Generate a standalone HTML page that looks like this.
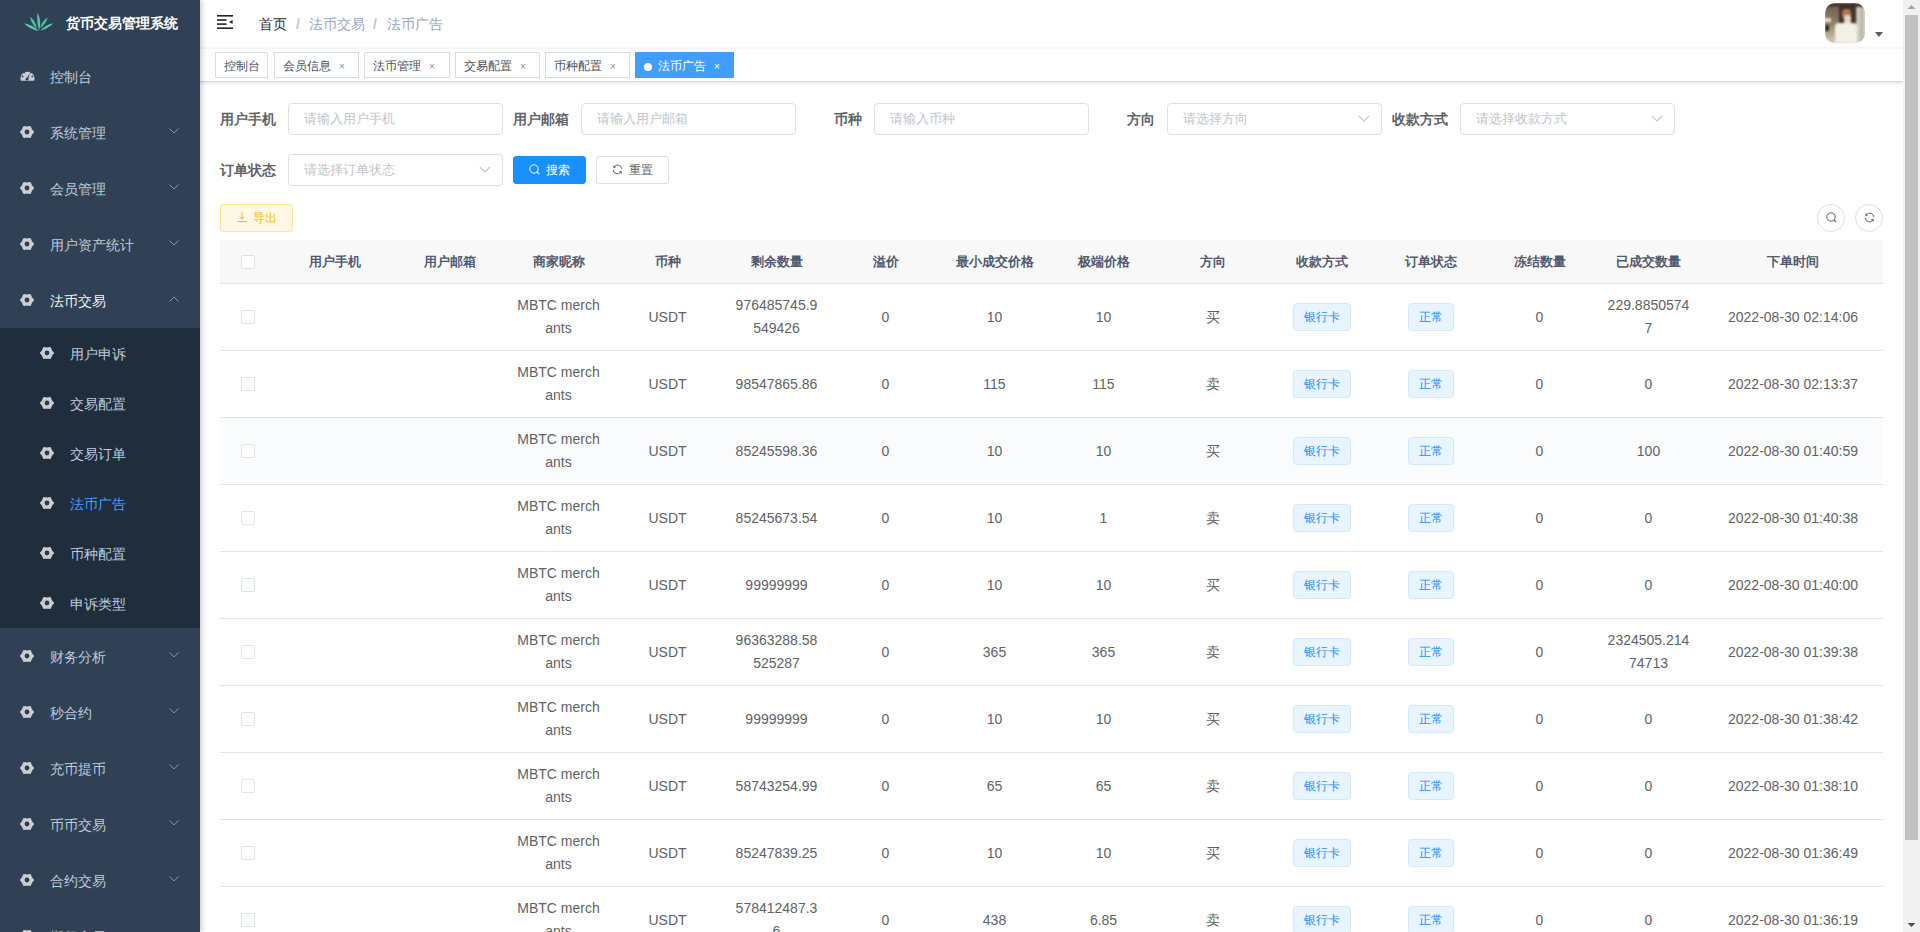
<!DOCTYPE html>
<html><head><meta charset="utf-8"><title>法币广告</title>
<style>
*{box-sizing:border-box;margin:0;padding:0}
html,body{width:1920px;height:932px;overflow:hidden;background:#fff;font-family:"Liberation Sans", sans-serif;}
#pg{position:absolute;left:0;top:0;width:1920px;height:932px;overflow:hidden}
.side{position:absolute;left:0;top:0;width:200px;height:932px;background:#304156;overflow:hidden;z-index:3;box-shadow:2px 0 5px rgba(0,21,41,.22)}
.title{position:absolute;left:66px;top:14px;font-size:14px;font-weight:bold;color:#fff;line-height:18px;white-space:nowrap;letter-spacing:0}
.mi,.si{position:absolute;left:0;width:200px;height:56px;color:#bfcbd9;font-size:14px}
.si{height:50px}
.mi .gi{position:absolute;left:20px;top:21px}
.si .gi{position:absolute;left:40px;top:18px}
.mt{position:absolute;left:50px;top:1px;line-height:56px;white-space:nowrap}
.si .mt{left:70px;line-height:50px}
.mi.open .mt{color:#f4f4f5}
.si.act .mt{color:#409eff}
.arr{position:absolute;left:169px;top:24px}
.sub{position:absolute;left:0;width:200px;background:#1f2d3d}
.nav{position:absolute;left:200px;top:0;width:1703px;height:48px;background:#fff}
.tv{position:absolute;left:200px;top:48px;width:1703px;height:34px;background:#fff;border-top:1px solid #f3f4f6;border-bottom:1px solid #d8dce5;box-shadow:0 1px 3px 0 rgba(0,0,0,.12),0 0 3px 0 rgba(0,0,0,.04);z-index:2}
.tg{position:absolute;top:52px;height:26px;border:1px solid #d8dce5;background:#fff;color:#495060;font-size:12px;line-height:26px;padding-left:8px;white-space:nowrap;z-index:2}
.tg span{display:inline-block}
.tg .cx{font-style:normal;display:inline-block;width:16px;text-align:center;font-size:10px;color:#8a8f99;margin-left:3px;position:relative;top:1px;vertical-align:top}
.tg.act{background:#409eff;border-color:#409eff;color:#fff}
.tg.act .cx{color:#fff}
.tg .dot{display:inline-block;width:8px;height:8px;border-radius:50%;background:#fff;margin-right:6px;vertical-align:-1px}
.crumb{position:absolute;top:16px;font-size:14px;line-height:16px;white-space:nowrap}
.lb{position:absolute;width:68px;height:32px;line-height:32px;text-align:right;padding-right:12px;font-size:14px;font-weight:bold;color:#606266;white-space:nowrap}
.inp{position:absolute;width:215px;height:32px;border:1px solid #dcdfe6;border-radius:4px;background:#fff}
.ph{position:absolute;left:15px;top:0;line-height:30px;font-size:13px;color:#c0c4cc;white-space:nowrap}
.sa{position:absolute;right:11px;top:11px}
.btn{position:absolute;height:28px;border-radius:3px;font-size:12px;line-height:26px;white-space:nowrap;text-align:center}
.tb{position:absolute;left:220px;top:240px;width:1663px;border-collapse:collapse;table-layout:fixed}
.tb th{background:#f8f8f9;height:43px;padding:10px 0;border-bottom:1px solid #e1e5ea;color:#515a6e;font-size:13px;font-weight:bold;text-align:center}
.tb td{padding:10px 0;border-bottom:1px solid #e1e5ea;color:#606266;font-size:14px;text-align:center;height:67px}
.tb tr.hov td{background:#fafbfc}
.cell{padding:0 10px;line-height:23px;word-break:break-all;white-space:normal}
.cb{display:inline-block;width:14px;height:14px;border:1px solid #e0e3e8;border-radius:2px;background:#fff;vertical-align:middle;position:relative;top:-1px}
.etag{display:inline-block;height:28px;line-height:26px;border:1px solid #d1e9ff;background:#e8f4ff;color:#1890ff;border-radius:4px;font-size:12px;text-align:center;vertical-align:middle}
.sb{position:absolute;left:1903px;top:0;width:17px;height:932px;background:#f1f1f1;z-index:5}
.thumb{position:absolute;left:2px;top:15px;width:13px;height:825px;background:#c1c1c1}
</style></head><body><div id="pg">
<div class="side">
<svg width="42" height="33" viewBox="0 0 42 33" style="position:absolute;left:18px;top:5px">
<path d="M21.3 25.5 Q23.8 16 19.6 7.5 Q18 16 21.3 25.5Z" fill="#52c4a0"/>
<path d="M18.8 23.5 Q17.5 15 12 11.8 Q13 18.5 18.8 23.5Z" fill="#4dbf9b"/>
<path d="M22.2 23.5 Q28.5 18 29.8 12.5 Q24 15.5 22.2 23.5Z" fill="#4dbf9b"/>
<path d="M21.2 26 Q14 19.5 5.8 18.3 Q12 24.5 21.2 26Z" fill="#5ac9a8"/>
<path d="M22.3 25.8 Q30 23.5 35.5 18.3 Q28.5 19 22.3 25.8Z" fill="#5ac9a8"/>
</svg>
<div class="title">货币交易管理系统</div>
<div class="mi" style="top:48px"><svg class="gi" width="15" height="13" viewBox="0 0 15 13"><path d="M0.9 11.8 A7 7 0 1 1 14.1 11.8 Z" fill="#c8cdd6"/><circle cx="2.6" cy="7.4" r="0.9" fill="#304156"/><circle cx="4.1" cy="3.6" r="0.9" fill="#304156"/><circle cx="7.4" cy="2.2" r="0.9" fill="#304156"/><circle cx="10.8" cy="3.6" r="0.9" fill="#304156"/><circle cx="12.3" cy="7.4" r="0.9" fill="#304156"/><path d="M6.3 9.8 L9.8 4.2 L8 10.6 Z" fill="#304156"/><circle cx="7" cy="10.2" r="1.4" fill="#304156"/></svg><span class="mt">控制台</span></div>
<div class="mi" style="top:104px"><svg class="gi" width="14" height="14" viewBox="0 0 14 14"><path d="M13.20 7.00 L11.33 9.38 L10.10 12.10 L7.00 11.75 L3.90 12.10 L2.67 9.38 L0.80 7.00 L2.67 4.62 L3.90 1.90 L7.00 2.25 L10.10 1.90 L11.33 4.62Z" fill="#c9ced6" stroke="#c9ced6" stroke-width="1.6" stroke-linejoin="round"/><circle cx="7" cy="7" r="2.4" fill="#38393c"/></svg><span class="mt">系统管理</span><svg class="arr" width="10" height="6" viewBox="0 0 10 6"><path d="M0.5 0.5 L5 5 L9.5 0.5" fill="none" stroke="#8593a5" stroke-width="1"/></svg></div>
<div class="mi" style="top:160px"><svg class="gi" width="14" height="14" viewBox="0 0 14 14"><path d="M13.20 7.00 L11.33 9.38 L10.10 12.10 L7.00 11.75 L3.90 12.10 L2.67 9.38 L0.80 7.00 L2.67 4.62 L3.90 1.90 L7.00 2.25 L10.10 1.90 L11.33 4.62Z" fill="#c9ced6" stroke="#c9ced6" stroke-width="1.6" stroke-linejoin="round"/><circle cx="7" cy="7" r="2.4" fill="#38393c"/></svg><span class="mt">会员管理</span><svg class="arr" width="10" height="6" viewBox="0 0 10 6"><path d="M0.5 0.5 L5 5 L9.5 0.5" fill="none" stroke="#8593a5" stroke-width="1"/></svg></div>
<div class="mi" style="top:216px"><svg class="gi" width="14" height="14" viewBox="0 0 14 14"><path d="M13.20 7.00 L11.33 9.38 L10.10 12.10 L7.00 11.75 L3.90 12.10 L2.67 9.38 L0.80 7.00 L2.67 4.62 L3.90 1.90 L7.00 2.25 L10.10 1.90 L11.33 4.62Z" fill="#c9ced6" stroke="#c9ced6" stroke-width="1.6" stroke-linejoin="round"/><circle cx="7" cy="7" r="2.4" fill="#38393c"/></svg><span class="mt">用户资产统计</span><svg class="arr" width="10" height="6" viewBox="0 0 10 6"><path d="M0.5 0.5 L5 5 L9.5 0.5" fill="none" stroke="#8593a5" stroke-width="1"/></svg></div>
<div class="mi open" style="top:272px"><svg class="gi" width="14" height="14" viewBox="0 0 14 14"><path d="M13.20 7.00 L11.33 9.38 L10.10 12.10 L7.00 11.75 L3.90 12.10 L2.67 9.38 L0.80 7.00 L2.67 4.62 L3.90 1.90 L7.00 2.25 L10.10 1.90 L11.33 4.62Z" fill="#c9ced6" stroke="#c9ced6" stroke-width="1.6" stroke-linejoin="round"/><circle cx="7" cy="7" r="2.4" fill="#38393c"/></svg><span class="mt">法币交易</span><svg class="arr" width="10" height="6" viewBox="0 0 10 6"><path d="M0.5 5.5 L5 1 L9.5 5.5" fill="none" stroke="#8593a5" stroke-width="1"/></svg></div>
<div class="sub" style="top:328px;height:300px"></div>
<div class="si" style="top:328px"><svg class="gi" width="14" height="14" viewBox="0 0 14 14"><path d="M13.20 7.00 L11.33 9.38 L10.10 12.10 L7.00 11.75 L3.90 12.10 L2.67 9.38 L0.80 7.00 L2.67 4.62 L3.90 1.90 L7.00 2.25 L10.10 1.90 L11.33 4.62Z" fill="#c9ced6" stroke="#c9ced6" stroke-width="1.6" stroke-linejoin="round"/><circle cx="7" cy="7" r="2.4" fill="#38393c"/></svg><span class="mt">用户申诉</span></div>
<div class="si" style="top:378px"><svg class="gi" width="14" height="14" viewBox="0 0 14 14"><path d="M13.20 7.00 L11.33 9.38 L10.10 12.10 L7.00 11.75 L3.90 12.10 L2.67 9.38 L0.80 7.00 L2.67 4.62 L3.90 1.90 L7.00 2.25 L10.10 1.90 L11.33 4.62Z" fill="#c9ced6" stroke="#c9ced6" stroke-width="1.6" stroke-linejoin="round"/><circle cx="7" cy="7" r="2.4" fill="#38393c"/></svg><span class="mt">交易配置</span></div>
<div class="si" style="top:428px"><svg class="gi" width="14" height="14" viewBox="0 0 14 14"><path d="M13.20 7.00 L11.33 9.38 L10.10 12.10 L7.00 11.75 L3.90 12.10 L2.67 9.38 L0.80 7.00 L2.67 4.62 L3.90 1.90 L7.00 2.25 L10.10 1.90 L11.33 4.62Z" fill="#c9ced6" stroke="#c9ced6" stroke-width="1.6" stroke-linejoin="round"/><circle cx="7" cy="7" r="2.4" fill="#38393c"/></svg><span class="mt">交易订单</span></div>
<div class="si act" style="top:478px"><svg class="gi" width="14" height="14" viewBox="0 0 14 14"><path d="M13.20 7.00 L11.33 9.38 L10.10 12.10 L7.00 11.75 L3.90 12.10 L2.67 9.38 L0.80 7.00 L2.67 4.62 L3.90 1.90 L7.00 2.25 L10.10 1.90 L11.33 4.62Z" fill="#c9ced6" stroke="#c9ced6" stroke-width="1.6" stroke-linejoin="round"/><circle cx="7" cy="7" r="2.4" fill="#38393c"/></svg><span class="mt">法币广告</span></div>
<div class="si" style="top:528px"><svg class="gi" width="14" height="14" viewBox="0 0 14 14"><path d="M13.20 7.00 L11.33 9.38 L10.10 12.10 L7.00 11.75 L3.90 12.10 L2.67 9.38 L0.80 7.00 L2.67 4.62 L3.90 1.90 L7.00 2.25 L10.10 1.90 L11.33 4.62Z" fill="#c9ced6" stroke="#c9ced6" stroke-width="1.6" stroke-linejoin="round"/><circle cx="7" cy="7" r="2.4" fill="#38393c"/></svg><span class="mt">币种配置</span></div>
<div class="si" style="top:578px"><svg class="gi" width="14" height="14" viewBox="0 0 14 14"><path d="M13.20 7.00 L11.33 9.38 L10.10 12.10 L7.00 11.75 L3.90 12.10 L2.67 9.38 L0.80 7.00 L2.67 4.62 L3.90 1.90 L7.00 2.25 L10.10 1.90 L11.33 4.62Z" fill="#c9ced6" stroke="#c9ced6" stroke-width="1.6" stroke-linejoin="round"/><circle cx="7" cy="7" r="2.4" fill="#38393c"/></svg><span class="mt">申诉类型</span></div>
<div class="mi" style="top:628px"><svg class="gi" width="14" height="14" viewBox="0 0 14 14"><path d="M13.20 7.00 L11.33 9.38 L10.10 12.10 L7.00 11.75 L3.90 12.10 L2.67 9.38 L0.80 7.00 L2.67 4.62 L3.90 1.90 L7.00 2.25 L10.10 1.90 L11.33 4.62Z" fill="#c9ced6" stroke="#c9ced6" stroke-width="1.6" stroke-linejoin="round"/><circle cx="7" cy="7" r="2.4" fill="#38393c"/></svg><span class="mt">财务分析</span><svg class="arr" width="10" height="6" viewBox="0 0 10 6"><path d="M0.5 0.5 L5 5 L9.5 0.5" fill="none" stroke="#8593a5" stroke-width="1"/></svg></div>
<div class="mi" style="top:684px"><svg class="gi" width="14" height="14" viewBox="0 0 14 14"><path d="M13.20 7.00 L11.33 9.38 L10.10 12.10 L7.00 11.75 L3.90 12.10 L2.67 9.38 L0.80 7.00 L2.67 4.62 L3.90 1.90 L7.00 2.25 L10.10 1.90 L11.33 4.62Z" fill="#c9ced6" stroke="#c9ced6" stroke-width="1.6" stroke-linejoin="round"/><circle cx="7" cy="7" r="2.4" fill="#38393c"/></svg><span class="mt">秒合约</span><svg class="arr" width="10" height="6" viewBox="0 0 10 6"><path d="M0.5 0.5 L5 5 L9.5 0.5" fill="none" stroke="#8593a5" stroke-width="1"/></svg></div>
<div class="mi" style="top:740px"><svg class="gi" width="14" height="14" viewBox="0 0 14 14"><path d="M13.20 7.00 L11.33 9.38 L10.10 12.10 L7.00 11.75 L3.90 12.10 L2.67 9.38 L0.80 7.00 L2.67 4.62 L3.90 1.90 L7.00 2.25 L10.10 1.90 L11.33 4.62Z" fill="#c9ced6" stroke="#c9ced6" stroke-width="1.6" stroke-linejoin="round"/><circle cx="7" cy="7" r="2.4" fill="#38393c"/></svg><span class="mt">充币提币</span><svg class="arr" width="10" height="6" viewBox="0 0 10 6"><path d="M0.5 0.5 L5 5 L9.5 0.5" fill="none" stroke="#8593a5" stroke-width="1"/></svg></div>
<div class="mi" style="top:796px"><svg class="gi" width="14" height="14" viewBox="0 0 14 14"><path d="M13.20 7.00 L11.33 9.38 L10.10 12.10 L7.00 11.75 L3.90 12.10 L2.67 9.38 L0.80 7.00 L2.67 4.62 L3.90 1.90 L7.00 2.25 L10.10 1.90 L11.33 4.62Z" fill="#c9ced6" stroke="#c9ced6" stroke-width="1.6" stroke-linejoin="round"/><circle cx="7" cy="7" r="2.4" fill="#38393c"/></svg><span class="mt">币币交易</span><svg class="arr" width="10" height="6" viewBox="0 0 10 6"><path d="M0.5 0.5 L5 5 L9.5 0.5" fill="none" stroke="#8593a5" stroke-width="1"/></svg></div>
<div class="mi" style="top:852px"><svg class="gi" width="14" height="14" viewBox="0 0 14 14"><path d="M13.20 7.00 L11.33 9.38 L10.10 12.10 L7.00 11.75 L3.90 12.10 L2.67 9.38 L0.80 7.00 L2.67 4.62 L3.90 1.90 L7.00 2.25 L10.10 1.90 L11.33 4.62Z" fill="#c9ced6" stroke="#c9ced6" stroke-width="1.6" stroke-linejoin="round"/><circle cx="7" cy="7" r="2.4" fill="#38393c"/></svg><span class="mt">合约交易</span><svg class="arr" width="10" height="6" viewBox="0 0 10 6"><path d="M0.5 0.5 L5 5 L9.5 0.5" fill="none" stroke="#8593a5" stroke-width="1"/></svg></div>
<div class="mi" style="top:908px"><svg class="gi" width="14" height="14" viewBox="0 0 14 14"><path d="M13.20 7.00 L11.33 9.38 L10.10 12.10 L7.00 11.75 L3.90 12.10 L2.67 9.38 L0.80 7.00 L2.67 4.62 L3.90 1.90 L7.00 2.25 L10.10 1.90 L11.33 4.62Z" fill="#c9ced6" stroke="#c9ced6" stroke-width="1.6" stroke-linejoin="round"/><circle cx="7" cy="7" r="2.4" fill="#38393c"/></svg><span class="mt">期权交易</span><svg class="arr" width="10" height="6" viewBox="0 0 10 6"><path d="M0.5 0.5 L5 5 L9.5 0.5" fill="none" stroke="#8593a5" stroke-width="1"/></svg></div>
</div>
<div class="nav">
<svg width="16" height="14" viewBox="0 0 16 14" style="position:absolute;left:17px;top:15px"><rect x="0" y="0" width="16" height="1.6" fill="#222"/><rect x="0" y="4.2" width="9.5" height="1.6" fill="#222"/><rect x="0" y="8.3" width="9.5" height="1.6" fill="#222"/><rect x="0" y="12.4" width="16" height="1.6" fill="#222"/><path d="M15.6 5 L12 7 L15.6 9 Z" fill="#222"/></svg>
<div class="crumb" style="left:59px;color:#303133">首页</div>
<div class="crumb" style="left:96px;color:#c0c4cc;font-weight:bold">/</div>
<div class="crumb" style="left:109px;color:#97a8be">法币交易</div>
<div class="crumb" style="left:173px;color:#c0c4cc;font-weight:bold">/</div>
<div class="crumb" style="left:187px;color:#97a8be">法币广告</div>
<div style="position:absolute;left:1625px;top:3px;width:40px;height:40px;border-radius:10px;overflow:hidden;background:#d4cdbc"><div style="position:absolute;left:-2px;top:-2px;width:44px;height:44px;filter:blur(1px)"><div style="position:absolute;left:2px;top:2px;width:40px;height:40px;background:#d4cdbc">
 <div style="position:absolute;left:0;top:0;width:14px;height:40px;background:linear-gradient(180deg,#6e5e4c 0%,#8c7a64 45%,#b5a58e 75%,#d8cbb8 100%)"></div>
 <div style="position:absolute;left:0;top:15px;width:6px;height:4px;background:#e8e0d0"></div>
 <div style="position:absolute;left:0;top:22px;width:4px;height:6px;background:#2e2822"></div>
 <div style="position:absolute;left:29px;top:0;width:11px;height:40px;background:linear-gradient(90deg,#9a9888 0%,#d9d8ca 40%,#b2b09e 70%,#e0dccd 100%)"></div>
 <div style="position:absolute;left:0;top:0;width:40px;height:4px;background:linear-gradient(180deg,#2a231e,#5a4a3c)"></div>
 <div style="position:absolute;left:14px;top:2px;width:17px;height:20px;background:#3e3229;border-radius:3px"></div>
 <div style="position:absolute;left:17px;top:6px;width:9px;height:9px;background:#b07a55;border-radius:4px 4px 2px 2px"></div>
 <div style="position:absolute;left:19px;top:12px;width:7px;height:9px;background:#e6d6c4;border-radius:2px"></div>
 <div style="position:absolute;left:10px;top:20px;width:22px;height:20px;background:#f3f0e6;border-radius:4px 4px 0 0"></div>
</div></div></div>
<svg width="8" height="5" viewBox="0 0 8 5" style="position:absolute;left:1675px;top:32px"><path d="M0 0 L8 0 L4 5Z" fill="#5a5e66"/></svg>
</div>
<div class="tv"></div>
<div class="tg" style="left:215px;width:53px"><span>控制台</span></div>
<div class="tg" style="left:274px;width:85px"><span>会员信息</span><i class="cx">×</i></div>
<div class="tg" style="left:364px;width:86px"><span>法币管理</span><i class="cx">×</i></div>
<div class="tg" style="left:455px;width:85px"><span>交易配置</span><i class="cx">×</i></div>
<div class="tg" style="left:545px;width:85px"><span>币种配置</span><i class="cx">×</i></div>
<div class="tg act" style="left:635px;width:99px"><i class="dot"></i><span>法币广告</span><i class="cx">×</i></div>
<div class="lb" style="left:220px;top:103px">用户手机</div>
<div class="inp" style="left:288px;top:103px"><span class="ph">请输入用户手机</span></div>
<div class="lb" style="left:513px;top:103px">用户邮箱</div>
<div class="inp" style="left:581px;top:103px"><span class="ph">请输入用户邮箱</span></div>
<div class="lb" style="left:806px;top:103px">币种</div>
<div class="inp" style="left:874px;top:103px"><span class="ph">请输入币种</span></div>
<div class="lb" style="left:1099px;top:103px">方向</div>
<div class="inp" style="left:1167px;top:103px"><span class="ph">请选择方向</span><svg class="sa" width="12" height="7" viewBox="0 0 12 7"><path d="M0.8 0.8 L6 6 L11.2 0.8" fill="none" stroke="#c0c4cc" stroke-width="1.2"/></svg></div>
<div class="lb" style="left:1392px;top:103px">收款方式</div>
<div class="inp" style="left:1460px;top:103px"><span class="ph">请选择收款方式</span><svg class="sa" width="12" height="7" viewBox="0 0 12 7"><path d="M0.8 0.8 L6 6 L11.2 0.8" fill="none" stroke="#c0c4cc" stroke-width="1.2"/></svg></div>
<div class="lb" style="left:220px;top:154px">订单状态</div>
<div class="inp" style="left:288px;top:154px"><span class="ph">请选择订单状态</span><svg class="sa" width="12" height="7" viewBox="0 0 12 7"><path d="M0.8 0.8 L6 6 L11.2 0.8" fill="none" stroke="#c0c4cc" stroke-width="1.2"/></svg></div>
<div class="btn" style="left:513px;top:156px;width:73px;background:#1890ff;border:1px solid #1890ff;color:#fff"><svg width="12" height="12" viewBox="0 0 12 12" style="vertical-align:-2px;margin-right:5px"><circle cx="5" cy="5" r="4.2" fill="none" stroke="#fff" stroke-width="1"/><path d="M8 8 L10.2 10.2" stroke="#fff" stroke-width="1.1"/></svg>搜索</div>
<div class="btn" style="left:596px;top:156px;width:73px;background:#fff;border:1px solid #dcdfe6;color:#606266"><svg width="12" height="12" viewBox="0 0 12 12" style="vertical-align:-2px;margin-right:5px"><path d="M2.3 2.6 A4.3 4.3 0 0 1 9.9 5" fill="none" stroke="#606266" stroke-width="1"/><path d="M1.1 5.8 A4.3 4.3 0 0 0 8.7 8.3" fill="none" stroke="#606266" stroke-width="1"/><path d="M1.2 1.2 L1.5 4.2 L4.2 3.2Z" fill="#606266"/><path d="M9.8 9.8 L9.5 6.8 L6.8 7.8Z" fill="#606266"/></svg>重置</div>
<div class="btn" style="left:220px;top:204px;width:73px;background:#fff8e6;border:1px solid #ffe399;color:#ffba00"><svg width="12" height="12" viewBox="0 0 12 12" style="vertical-align:-1px;margin-right:5px"><path d="M6 1.5 L6 8.2 M3.6 5.8 L6 8.2 L8.4 5.8 M1.5 10.5 L10.5 10.5" fill="none" stroke="#f0b030" stroke-width="1"/></svg>导出</div>
<div class="btn" style="left:1817px;top:204px;width:28px;border:1px solid #dcdfe6;border-radius:50%;background:#fff"><svg width="12" height="12" viewBox="0 0 12 12" style="position:absolute;left:8px;top:7px"><circle cx="5" cy="5" r="4.2" fill="none" stroke="#606266" stroke-width="1"/><path d="M8 8 L10.2 10.2" stroke="#606266" stroke-width="1.1"/></svg></div>
<div class="btn" style="left:1855px;top:204px;width:28px;border:1px solid #dcdfe6;border-radius:50%;background:#fff"><svg width="12" height="12" viewBox="0 0 12 12" style="position:absolute;left:8px;top:7px"><path d="M2.3 2.6 A4.3 4.3 0 0 1 9.9 5" fill="none" stroke="#606266" stroke-width="1"/><path d="M1.1 5.8 A4.3 4.3 0 0 0 8.7 8.3" fill="none" stroke="#606266" stroke-width="1"/><path d="M1.2 1.2 L1.5 4.2 L4.2 3.2Z" fill="#606266"/><path d="M9.8 9.8 L9.5 6.8 L6.8 7.8Z" fill="#606266"/></svg></div>
<table class="tb"><colgroup><col style="width:55px"><col style="width:120px"><col style="width:109px"><col style="width:109px"><col style="width:109px"><col style="width:109px"><col style="width:109px"><col style="width:109px"><col style="width:109px"><col style="width:109px"><col style="width:109px"><col style="width:109px"><col style="width:109px"><col style="width:109px"><col style="width:180px"></colgroup><thead><tr><th><div class="cell"><i class="cb"></i></div></th><th><div class="cell">用户手机</div></th><th><div class="cell">用户邮箱</div></th><th><div class="cell">商家昵称</div></th><th><div class="cell">币种</div></th><th><div class="cell">剩余数量</div></th><th><div class="cell">溢价</div></th><th><div class="cell">最小成交价格</div></th><th><div class="cell">极端价格</div></th><th><div class="cell">方向</div></th><th><div class="cell">收款方式</div></th><th><div class="cell">订单状态</div></th><th><div class="cell">冻结数量</div></th><th><div class="cell">已成交数量</div></th><th><div class="cell">下单时间</div></th></tr></thead><tbody><tr><td><div class="cell"><i class="cb"></i></div></td><td><div class="cell"></div></td><td><div class="cell"></div></td><td><div class="cell">MBTC merchants</div></td><td><div class="cell">USDT</div></td><td><div class="cell">976485745.9549426</div></td><td><div class="cell">0</div></td><td><div class="cell">10</div></td><td><div class="cell">10</div></td><td><div class="cell">买</div></td><td><div class="cell"><span class="etag" style="width:58px">银行卡</span></div></td><td><div class="cell"><span class="etag" style="width:46px">正常</span></div></td><td><div class="cell">0</div></td><td><div class="cell">229.88505747</div></td><td><div class="cell">2022-08-30 02:14:06</div></td></tr><tr><td><div class="cell"><i class="cb"></i></div></td><td><div class="cell"></div></td><td><div class="cell"></div></td><td><div class="cell">MBTC merchants</div></td><td><div class="cell">USDT</div></td><td><div class="cell">98547865.86</div></td><td><div class="cell">0</div></td><td><div class="cell">115</div></td><td><div class="cell">115</div></td><td><div class="cell">卖</div></td><td><div class="cell"><span class="etag" style="width:58px">银行卡</span></div></td><td><div class="cell"><span class="etag" style="width:46px">正常</span></div></td><td><div class="cell">0</div></td><td><div class="cell">0</div></td><td><div class="cell">2022-08-30 02:13:37</div></td></tr><tr class="hov"><td><div class="cell"><i class="cb"></i></div></td><td><div class="cell"></div></td><td><div class="cell"></div></td><td><div class="cell">MBTC merchants</div></td><td><div class="cell">USDT</div></td><td><div class="cell">85245598.36</div></td><td><div class="cell">0</div></td><td><div class="cell">10</div></td><td><div class="cell">10</div></td><td><div class="cell">买</div></td><td><div class="cell"><span class="etag" style="width:58px">银行卡</span></div></td><td><div class="cell"><span class="etag" style="width:46px">正常</span></div></td><td><div class="cell">0</div></td><td><div class="cell">100</div></td><td><div class="cell">2022-08-30 01:40:59</div></td></tr><tr><td><div class="cell"><i class="cb"></i></div></td><td><div class="cell"></div></td><td><div class="cell"></div></td><td><div class="cell">MBTC merchants</div></td><td><div class="cell">USDT</div></td><td><div class="cell">85245673.54</div></td><td><div class="cell">0</div></td><td><div class="cell">10</div></td><td><div class="cell">1</div></td><td><div class="cell">卖</div></td><td><div class="cell"><span class="etag" style="width:58px">银行卡</span></div></td><td><div class="cell"><span class="etag" style="width:46px">正常</span></div></td><td><div class="cell">0</div></td><td><div class="cell">0</div></td><td><div class="cell">2022-08-30 01:40:38</div></td></tr><tr><td><div class="cell"><i class="cb"></i></div></td><td><div class="cell"></div></td><td><div class="cell"></div></td><td><div class="cell">MBTC merchants</div></td><td><div class="cell">USDT</div></td><td><div class="cell">99999999</div></td><td><div class="cell">0</div></td><td><div class="cell">10</div></td><td><div class="cell">10</div></td><td><div class="cell">买</div></td><td><div class="cell"><span class="etag" style="width:58px">银行卡</span></div></td><td><div class="cell"><span class="etag" style="width:46px">正常</span></div></td><td><div class="cell">0</div></td><td><div class="cell">0</div></td><td><div class="cell">2022-08-30 01:40:00</div></td></tr><tr><td><div class="cell"><i class="cb"></i></div></td><td><div class="cell"></div></td><td><div class="cell"></div></td><td><div class="cell">MBTC merchants</div></td><td><div class="cell">USDT</div></td><td><div class="cell">96363288.58525287</div></td><td><div class="cell">0</div></td><td><div class="cell">365</div></td><td><div class="cell">365</div></td><td><div class="cell">卖</div></td><td><div class="cell"><span class="etag" style="width:58px">银行卡</span></div></td><td><div class="cell"><span class="etag" style="width:46px">正常</span></div></td><td><div class="cell">0</div></td><td><div class="cell">2324505.21474713</div></td><td><div class="cell">2022-08-30 01:39:38</div></td></tr><tr><td><div class="cell"><i class="cb"></i></div></td><td><div class="cell"></div></td><td><div class="cell"></div></td><td><div class="cell">MBTC merchants</div></td><td><div class="cell">USDT</div></td><td><div class="cell">99999999</div></td><td><div class="cell">0</div></td><td><div class="cell">10</div></td><td><div class="cell">10</div></td><td><div class="cell">买</div></td><td><div class="cell"><span class="etag" style="width:58px">银行卡</span></div></td><td><div class="cell"><span class="etag" style="width:46px">正常</span></div></td><td><div class="cell">0</div></td><td><div class="cell">0</div></td><td><div class="cell">2022-08-30 01:38:42</div></td></tr><tr><td><div class="cell"><i class="cb"></i></div></td><td><div class="cell"></div></td><td><div class="cell"></div></td><td><div class="cell">MBTC merchants</div></td><td><div class="cell">USDT</div></td><td><div class="cell">58743254.99</div></td><td><div class="cell">0</div></td><td><div class="cell">65</div></td><td><div class="cell">65</div></td><td><div class="cell">卖</div></td><td><div class="cell"><span class="etag" style="width:58px">银行卡</span></div></td><td><div class="cell"><span class="etag" style="width:46px">正常</span></div></td><td><div class="cell">0</div></td><td><div class="cell">0</div></td><td><div class="cell">2022-08-30 01:38:10</div></td></tr><tr><td><div class="cell"><i class="cb"></i></div></td><td><div class="cell"></div></td><td><div class="cell"></div></td><td><div class="cell">MBTC merchants</div></td><td><div class="cell">USDT</div></td><td><div class="cell">85247839.25</div></td><td><div class="cell">0</div></td><td><div class="cell">10</div></td><td><div class="cell">10</div></td><td><div class="cell">买</div></td><td><div class="cell"><span class="etag" style="width:58px">银行卡</span></div></td><td><div class="cell"><span class="etag" style="width:46px">正常</span></div></td><td><div class="cell">0</div></td><td><div class="cell">0</div></td><td><div class="cell">2022-08-30 01:36:49</div></td></tr><tr><td><div class="cell"><i class="cb"></i></div></td><td><div class="cell"></div></td><td><div class="cell"></div></td><td><div class="cell">MBTC merchants</div></td><td><div class="cell">USDT</div></td><td><div class="cell">578412487.36</div></td><td><div class="cell">0</div></td><td><div class="cell">438</div></td><td><div class="cell">6.85</div></td><td><div class="cell">卖</div></td><td><div class="cell"><span class="etag" style="width:58px">银行卡</span></div></td><td><div class="cell"><span class="etag" style="width:46px">正常</span></div></td><td><div class="cell">0</div></td><td><div class="cell">0</div></td><td><div class="cell">2022-08-30 01:36:19</div></td></tr></tbody></table>
<div class="sb"><svg width="17" height="14" viewBox="0 0 17 14" style="position:absolute;left:0;top:0"><path d="M4.5 9 L8.5 5 L12.5 9Z" fill="#a3a3a3"/></svg><div class="thumb"></div><svg width="17" height="14" viewBox="0 0 17 14" style="position:absolute;left:0;top:918px"><path d="M4.5 5 L8.5 9 L12.5 5Z" fill="#505050"/></svg></div>
</div></body></html>
